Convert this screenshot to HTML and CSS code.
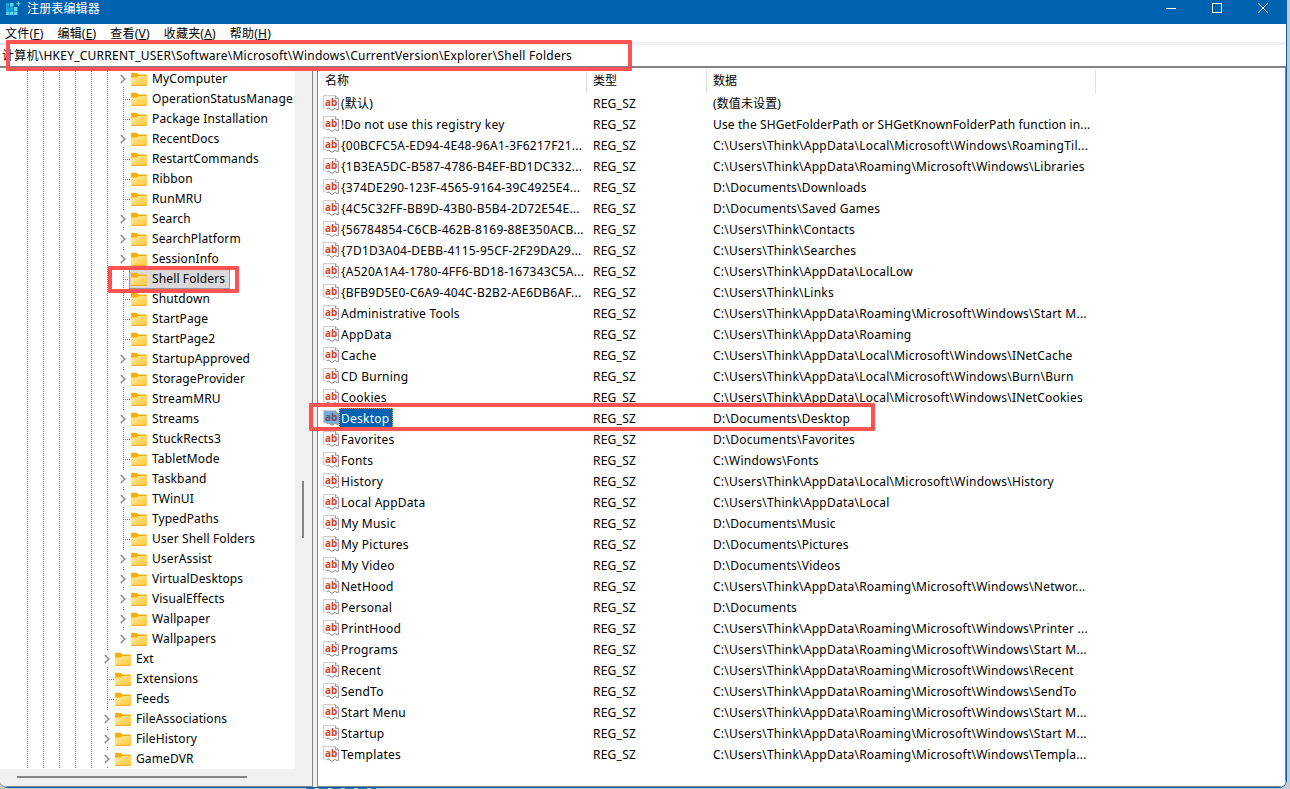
FILE: index.html
```html
<!DOCTYPE html>
<html lang="zh-CN">
  <head>
    <meta charset="UTF-8" />
    <meta name="viewport" content="width=device-width, initial-scale=1.0" />
    <title>注册表编辑器</title>
    <link rel="stylesheet" href="styles.css" />
  </head>
  <body>
    <svg class="sprite" width="0" height="0">
      <defs>
        <linearGradient id="folderFill" x1="0" y1="0" x2="1" y2="1">
          <stop offset="0" stop-color="#ffe9a2" />
          <stop offset="1" stop-color="#ffc937" />
        </linearGradient>
        <symbol id="folder" viewBox="0 0 16 14">
          <path d="M0 2a1.2 1.2 0 0 1 1.2-1.2h4.6L7.6 2.6h7.2A1.2 1.2 0 0 1 16 3.8V8H0z" fill="#f4b010" />
          <path d="M0 5.4h6L7.6 4H16v8.6a.9.9 0 0 1-.9.9H.9a.9.9 0 0 1-.9-.9z" fill="url(#folderFill)" />
          <path d="M.3 13.3h15.4" stroke="#e9a520" stroke-width="1" />
        </symbol>
        <symbol id="arrow" viewBox="0 0 8 10">
          <path d="M1.8 1l4 4-4 4" fill="none" stroke="#8b8b8b" stroke-width="1.6" />
        </symbol>
        <symbol id="value" viewBox="0 0 16 16">
          <path class="paper" d="M.5 .5h12l3 3v11h-1.5l-2-1.2-2 1.7h-2l-2-2-2 .8-1.5-1-2 .2z" stroke="#cdcdcd" />
          <path d="M12.5 .5v3h3M15.5 3.5v11h-1.5l-2-1.2-2 1.7h-2l-2-2-2 .8" fill="none" stroke="#9a9a9a" />
        </symbol>
      </defs>
    </svg>

    <div class="window">
      <div class="titlebar">
        <svg class="app-icon" width="16" height="16" viewBox="0 0 16 16">
          <path d="M1 2h3.5v3.5H1zM1 6h3.5v4H1zM5 6h3.5v4H5z" fill="#14a9d6" />
          <path d="M5 2h3.5v3.5H5zM1 10.5h3.5V14H1zM5 10.5h3.5V14H5zM9 6h3.5v4H9zM9 10.5h3.5V14H9z" fill="#5bd3f2" />
          <path d="M13.5 .8v4M11.5 2.8h4" stroke="#6ee0f7" />
        </svg>
        <span class="title">注册表编辑器</span>
        <div class="controls">
          <svg width="10" height="10"><path d="M0 5.5h10" stroke="#fff" /></svg>
          <svg width="10" height="10"><rect x=".5" y=".5" width="9" height="9" fill="none" stroke="#fff" /></svg>
          <svg width="10" height="10"><path d="M0 0l10 10M10 0L0 10" stroke="#fff" /></svg>
        </div>
      </div>

      <div class="menu">
        <span>文件(<u>F</u>)</span>
        <span>编辑(<u>E</u>)</span>
        <span>查看(<u>V</u>)</span>
        <span>收藏夹(<u>A</u>)</span>
        <span>帮助(<u>H</u>)</span>
      </div>

      <div class="address">计算机\HKEY_CURRENT_USER\Software\Microsoft\Windows\CurrentVersion\Explorer\Shell Folders</div>

      <div class="panes">
        <div class="tree-pane">
          <div class="tree-top">
            <div class="tree" id="tree"></div>
            <div class="scroll-v"><div class="thumb-v"></div></div>
          </div>
          <div class="scroll-h"><div class="thumb-h"></div></div>
        </div>
        <div class="list-pane">
          <div class="list-row list-head">
            <span class="col-name">名称</span>
            <span class="col-type">类型</span>
            <span class="col-data">数据</span>
          </div>
          <div id="values"></div>
        </div>
      </div>
    </div>

    <div class="behind"></div>
    <div class="mark mark-path"></div>
    <div class="mark mark-key"></div>
    <div class="mark mark-value"></div>

    <script src="script.js"></script>
  </body>
</html>
```
FILE: styles.css
```css
* {
  padding: 0;
  margin: 0;
  box-sizing: border-box;
}
body {
  height: 789px;
  overflow: hidden;
  background: #c9c9c9;
  font-family: "Noto Sans", "Noto Sans CJK SC", sans-serif;
  font-size: 12px;
  color: #000;
}
.sprite {
  position: absolute;
}
svg {
  flex: none;
}
.window {
  width: 1287px;
  height: 788px;
  display: flex;
  flex-direction: column;
  background: #fff;
  border-right: 1px solid #0063b1;
  border-bottom: 1px solid #0063b1;
  border-radius: 0 0 8px 8px;
  overflow: hidden;
}

/* title bar */
.titlebar {
  height: 24px;
  flex: none;
  display: flex;
  align-items: flex-start;
  background: #0063b1;
  color: #fff;
}
.app-icon {
  margin: 1px 0 0 5px;
}
.title {
  margin-left: 6px;
  line-height: 16px;
  letter-spacing: 0.15px;
  font-family: "Noto Sans CJK SC", sans-serif;
}
.controls {
  margin-left: auto;
  display: flex;
  gap: 36px;
  padding: 3px 18px 0 0;
}

/* menu and address */
.menu {
  height: 21px;
  flex: none;
  display: flex;
  gap: 14px;
  padding-left: 5px;
  line-height: 20px;
  letter-spacing: 0.2px;
  border-bottom: 3px solid #f0f0f0;
}
.menu u {
  text-underline-offset: 1px;
}
.address {
  height: 23px;
  flex: none;
  padding-left: 2px;
  line-height: 21px;
  letter-spacing: 0.24px;
  white-space: nowrap;
  border-bottom: 2px solid #838388;
}

.panes {
  flex: 1;
  min-height: 0;
  display: flex;
  background: #f0f0f0;
}
.tree-pane {
  width: 313px;
  display: flex;
  flex-direction: column;
  background: #f0f0f0;
  border-right: 1px solid #838388;
  border-bottom: 1px solid #838388;
}
.tree-top {
  flex: 1;
  display: flex;
  min-height: 0;
}
.tree {
  width: 295px;
  padding-top: 1px;
  background: #fff;
  overflow: hidden;
}
.scroll-v {
  flex: 1;
  padding: 413px 0 0 7px;
}
.thumb-v {
  width: 2px;
  height: 57px;
  background: #858585;
}
.scroll-h {
  height: 17px;
  padding: 7px 0 0 17px;
}
.thumb-h {
  width: 230px;
  height: 2px;
  background: #858585;
}

/* tree rows */
.tree-row {
  height: 20px;
  display: flex;
  align-items: center;
  padding-left: 19px;
  white-space: nowrap;
}
.guide {
  width: 16px;
  height: 20px;
  flex: none;
  display: flex;
  align-items: center;
  background: repeating-linear-gradient(#7f7f7f 0 1px, transparent 1px 2px) 8px 0 / 1px 20px no-repeat;
}
.guide.leaf::after {
  content: "";
  width: 7px;
  height: 1px;
  margin-left: 9px;
  background: repeating-linear-gradient(90deg, transparent 0 1px, #7f7f7f 1px 2px);
}
.guide.parent svg {
  width: 8px;
  height: 16px;
  margin-left: 4px;
  background: #fff;
}
.guide.last {
  background-size: 1px 10px;
}
.node {
  height: 20px;
  display: flex;
  align-items: center;
}
.node .label {
  margin-bottom: 2px;
  padding: 0 4px 0 5px;
  letter-spacing: 0.13px;
}
.node.selected {
  margin-left: -2px;
  padding-left: 1px;
  background: #d9d9d9;
  border: 1px solid #999;
}

/* value list */
.list-pane {
  flex: 1;
  margin-left: 4px;
  background: #fff;
  border-left: 1px solid #838388;
  border-right: 1px solid #838388;
  border-bottom: 1px solid #838388;
}
.list-row {
  height: 21px;
  display: flex;
  line-height: 21px;
  letter-spacing: 0.24px;
  white-space: nowrap;
}
.list-row span {
  flex: none;
}
.col-name {
  width: 269px;
  display: flex;
  padding-left: 5px;
}
.col-type {
  width: 120px;
  padding-left: 6px;
}
.col-data {
  width: 389px;
  padding-left: 6px;
}
.col-data.prose {
  letter-spacing: 0.12px;
}
.list-head {
  height: 25px;
  padding-top: 1px;
  line-height: 22px;
  letter-spacing: 0;
  font-family: "Noto Sans CJK SC", sans-serif;
}
.list-head span {
  border-right: 1px solid #e2e2e2;
}
.list-head .col-name {
  padding-left: 7px;
}
.value-icon {
  width: 16px;
  height: 16px;
  margin-top: 2px;
  fill: #fdfdfd;
}
.value-icon text {
  font: bold 10px "Open Sans", sans-serif;
  letter-spacing: 0;
  fill: #d4451f;
}
.value-label {
  padding: 0 4px 0 2px;
}
.selected .value-icon {
  fill: #76acd8;
}
.selected .value-icon text {
  fill: #6a5068;
}
.selected .value-label {
  color: #fff;
  background: #0063b1;
  outline: 1px dotted #ff9c4e;
  outline-offset: -1px;
}

/* highlight frames over the window */
.mark {
  position: absolute;
  border: 4px solid #ff5252;
  border-radius: 1px;
}
.mark-path {
  left: 6px;
  top: 40px;
  width: 626px;
  height: 31px;
}
.mark-key {
  left: 108px;
  top: 266px;
  width: 131px;
  height: 27px;
}
.mark-value {
  left: 309px;
  top: 403px;
  width: 566px;
  height: 28px;
}
.behind {
  width: 70px;
  height: 1px;
  margin-left: 306px;
  background: repeating-linear-gradient(90deg, #2a7cc0 0 9px, #c9c9c9 9px 13px);
}
```
FILE: script.js
```js
// [name, depth, has children]
const keys = [
  ["MyComputer", 6, 1],
  ["OperationStatusManage", 6, 0],
  ["Package Installation", 6, 0],
  ["RecentDocs", 6, 1],
  ["RestartCommands", 6, 0],
  ["Ribbon", 6, 0],
  ["RunMRU", 6, 0],
  ["Search", 6, 1],
  ["SearchPlatform", 6, 1],
  ["SessionInfo", 6, 1],
  ["Shell Folders", 6, 0],
  ["Shutdown", 6, 0],
  ["StartPage", 6, 0],
  ["StartPage2", 6, 0],
  ["StartupApproved", 6, 1],
  ["StorageProvider", 6, 1],
  ["StreamMRU", 6, 0],
  ["Streams", 6, 1],
  ["StuckRects3", 6, 0],
  ["TabletMode", 6, 0],
  ["Taskband", 6, 1],
  ["TWinUI", 6, 1],
  ["TypedPaths", 6, 0],
  ["User Shell Folders", 6, 0],
  ["UserAssist", 6, 1],
  ["VirtualDesktops", 6, 1],
  ["VisualEffects", 6, 1],
  ["Wallpaper", 6, 1],
  ["Wallpapers", 6, 1],
  ["Ext", 5, 1],
  ["Extensions", 5, 0],
  ["Feeds", 5, 0],
  ["FileAssociations", 5, 1],
  ["FileHistory", 5, 1],
  ["GameDVR", 5, 1],
];

const roaming = "C:\\Users\\Think\\AppData\\Roaming";
const local = "C:\\Users\\Think\\AppData\\Local";

const values = [
  ["(默认)", "(数值未设置)"],
  ["!Do not use this registry key", "Use the SHGetFolderPath or SHGetKnownFolderPath function in..."],
  ["{00BCFC5A-ED94-4E48-96A1-3F6217F21...", local + "\\Microsoft\\Windows\\RoamingTil..."],
  ["{1B3EA5DC-B587-4786-B4EF-BD1DC332...", roaming + "\\Microsoft\\Windows\\Libraries"],
  ["{374DE290-123F-4565-9164-39C4925E4...", "D:\\Documents\\Downloads"],
  ["{4C5C32FF-BB9D-43B0-B5B4-2D72E54E...", "D:\\Documents\\Saved Games"],
  ["{56784854-C6CB-462B-8169-88E350ACB...", "C:\\Users\\Think\\Contacts"],
  ["{7D1D3A04-DEBB-4115-95CF-2F29DA29...", "C:\\Users\\Think\\Searches"],
  ["{A520A1A4-1780-4FF6-BD18-167343C5A...", "C:\\Users\\Think\\AppData\\LocalLow"],
  ["{BFB9D5E0-C6A9-404C-B2B2-AE6DB6AF...", "C:\\Users\\Think\\Links"],
  ["Administrative Tools", roaming + "\\Microsoft\\Windows\\Start M..."],
  ["AppData", roaming],
  ["Cache", local + "\\Microsoft\\Windows\\INetCache"],
  ["CD Burning", local + "\\Microsoft\\Windows\\Burn\\Burn"],
  ["Cookies", local + "\\Microsoft\\Windows\\INetCookies"],
  ["Desktop", "D:\\Documents\\Desktop"],
  ["Favorites", "D:\\Documents\\Favorites"],
  ["Fonts", "C:\\Windows\\Fonts"],
  ["History", local + "\\Microsoft\\Windows\\History"],
  ["Local AppData", local],
  ["My Music", "D:\\Documents\\Music"],
  ["My Pictures", "D:\\Documents\\Pictures"],
  ["My Video", "D:\\Documents\\Videos"],
  ["NetHood", roaming + "\\Microsoft\\Windows\\Networ..."],
  ["Personal", "D:\\Documents"],
  ["PrintHood", roaming + "\\Microsoft\\Windows\\Printer ..."],
  ["Programs", roaming + "\\Microsoft\\Windows\\Start M..."],
  ["Recent", roaming + "\\Microsoft\\Windows\\Recent"],
  ["SendTo", roaming + "\\Microsoft\\Windows\\SendTo"],
  ["Start Menu", roaming + "\\Microsoft\\Windows\\Start M..."],
  ["Startup", roaming + "\\Microsoft\\Windows\\Start M..."],
  ["Templates", roaming + "\\Microsoft\\Windows\\Templa..."],
];

function treeRow([name, depth, parent]) {
  const guides = '<span class="guide"></span>'.repeat(depth);
  const last = name === "Wallpapers" ? " last" : "";
  const joint = parent
    ? `<span class="guide parent${last}"><svg><use href="#arrow" /></svg></span>`
    : '<span class="guide leaf"></span>';
  const selected = name === "Shell Folders" ? " selected" : "";
  return `<div class="tree-row">${guides}${joint}<span class="node${selected}"><svg width="16" height="14"><use href="#folder" /></svg><span class="label">${name}</span></span></div>`;
}

function valueRow([name, data]) {
  const selected = name === "Desktop" ? " selected" : "";
  const prose = data.includes(":\\") ? "" : " prose";
  return `<div class="list-row${selected}">
    <span class="col-name"><svg class="value-icon"><use href="#value" /><text x="2" y="10.5">ab</text></svg><span class="value-label">${name}</span></span>
    <span class="col-type">REG_SZ</span>
    <span class="col-data${prose}">${data}</span>
  </div>`;
}

document.getElementById("tree").innerHTML = keys.map(treeRow).join("");
document.getElementById("values").innerHTML = values.map(valueRow).join("");
```
